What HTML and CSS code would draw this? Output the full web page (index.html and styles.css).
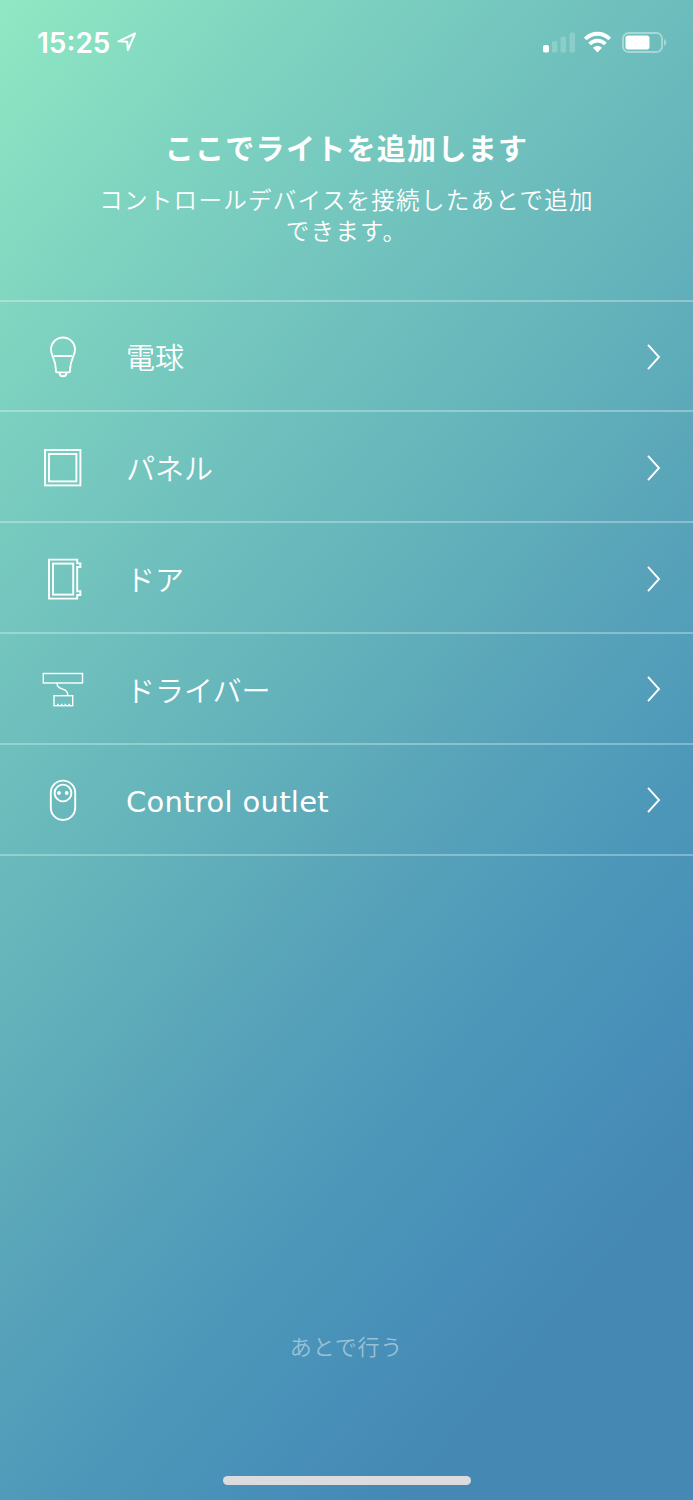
FILE: index.html
```html
<!DOCTYPE html>
<html lang="ja">
<head>
  <meta charset="UTF-8" />
  <meta name="viewport" content="width=device-width, initial-scale=1.0"/>
  <title>ライトを追加</title>
  <link rel="stylesheet" href="styles.css">
</head>
<body>

<!-- Status bar -->
<div class="status-bar">
  <span class="time">15:25</span>
  <svg class="location" width="20" height="20" viewBox="0 0 20 20">
    <path d="M1.5 9.3 L18 1.5 L10.8 18 L10.3 9.8 Z"/>
  </svg>
  <div class="status-icons">
    <svg width="33" height="22" viewBox="0 0 33 22">
      <rect class="solid" x="0" y="13" width="6" height="7.5" rx="1.8"/>
      <rect class="faint" x="9" y="9" width="5.5" height="11.5" rx="1.5"/>
      <rect class="faint" x="17.5" y="4.5" width="5.5" height="16" rx="1.5"/>
      <rect class="faint" x="26.5" y="0.5" width="5.5" height="20" rx="1.5"/>
    </svg>
    <svg class="wifi" width="28" height="22" viewBox="0 0 28 22">
      <path d="M1.3 7 C8.1 0 18.9 0 25.7 7"/>
      <path d="M5.6 12 C10.1 7.6 16.9 7.6 21.4 12"/>
      <path class="dot" d="M9 15.8 C11.5 13.3 15.5 13.3 18 15.8 L13.5 20.6 Z"/>
    </svg>
    <svg width="45" height="22" viewBox="0 0 45 22">
      <rect class="battery" x="1" y="1" width="39" height="19" rx="5.5"/>
      <rect class="solid" x="3.5" y="3.5" width="24" height="14" rx="2.8"/>
      <path class="cap" d="M42 7 C45 8.5 45 12.5 42 14 Z"/>
    </svg>
  </div>
</div>

<!-- Header -->
<div class="header">
  <h1>ここでライトを追加します</h1>
  <p>コントロールデバイスを接続したあとで追加<br>できます。</p>
</div>

<!-- Device list -->
<ul class="device-list">
  <li class="device">
    <svg class="icon" width="42" height="44" viewBox="0 0 42 44">
      <path d="M13.9 34.5 C13.9 24 9 21.5 9 14.5 A12 12 0 0 1 33 14.5 C33 21.5 28.1 24 28.1 34.5 V36.2 Q28.1 37.4 26.9 37.4 H15.1 Q13.9 37.4 13.9 36.2 Z"/>
      <path d="M11.8 21 H30.2"/>
      <path d="M17.5 38 C17.5 42.3 24.5 42.3 24.5 38"/>
    </svg>
    <span class="label">電球</span>
    <svg class="chevron" width="14" height="28" viewBox="0 0 14 28"><path d="M1 1.8 L12 14 L1 26.2"/></svg>
  </li>
  <li class="device">
    <svg class="icon" width="42" height="44" viewBox="0 0 42 44">
      <rect x="3" y="4" width="35.4" height="35.4"/>
      <rect x="7" y="8" width="27.4" height="27.4"/>
    </svg>
    <span class="label">パネル</span>
    <svg class="chevron" width="14" height="28" viewBox="0 0 14 28"><path d="M1 1.8 L12 14 L1 26.2"/></svg>
  </li>
  <li class="device">
    <svg class="icon" width="42" height="44" viewBox="0 0 42 44">
      <path d="M7 2.6 H35.2 V6.4 H38.4 V10 H35.2 V34.3 H38.4 V38 H35.2 V41.6 H7 Z"/>
      <rect x="11" y="6.6" width="20.2" height="31"/>
    </svg>
    <span class="label">ドア</span>
    <svg class="chevron" width="14" height="28" viewBox="0 0 14 28"><path d="M1 1.8 L12 14 L1 26.2"/></svg>
  </li>
  <li class="device">
    <svg class="icon thin" width="42" height="44" viewBox="0 0 42 44">
      <rect x="1.3" y="6.5" width="39.2" height="9.5"/>
      <path d="M15 16 C15 24.5 25.8 19 25.8 28.7"/>
      <rect x="12" y="28.7" width="18.7" height="10"/>
      <path class="dots" d="M15 37.6 H29"/>
    </svg>
    <span class="label">ドライバー</span>
    <svg class="chevron" width="14" height="28" viewBox="0 0 14 28"><path d="M1 1.8 L12 14 L1 26.2"/></svg>
  </li>
  <li class="device">
    <svg class="icon" width="42" height="44" viewBox="0 0 42 44">
      <rect x="8.8" y="2.6" width="24.4" height="39.4" rx="12.2"/>
      <circle cx="21" cy="15" r="8.4"/>
      <circle class="solid" cx="17" cy="15" r="1.9"/>
      <circle class="solid" cx="24.7" cy="15" r="1.9"/>
    </svg>
    <span class="label latin">Control outlet</span>
    <svg class="chevron" width="14" height="28" viewBox="0 0 14 28"><path d="M1 1.8 L12 14 L1 26.2"/></svg>
  </li>
</ul>

<!-- Footer -->
<div class="footer">
  <a class="later">あとで行う</a>
  <div class="home-bar"></div>
</div>

</body>
</html>
```
FILE: styles.css
```css
* {
  margin: 0;
  padding: 0;
  box-sizing: border-box;
}

body {
  height: 1500px;
  display: flex;
  flex-direction: column;
  overflow: hidden;
  color: #fff;
  font-family: "Noto Sans CJK JP", sans-serif;
  background: linear-gradient(130.5deg, #90e8c3 0%, #7fd4c0 15%, #6fc0bd 32%, #65b4bb 43%, #58a3b9 57%, #4c97b9 69%, #478db8 80%, #4488b3 86%);
}

svg {
  fill: none;
  stroke: #fff;
  flex-shrink: 0;
}

.solid {
  fill: #fff;
  stroke: none;
}

.status-bar {
  height: 84px;
  padding: 1px 26px 0 37px;
  display: flex;
  align-items: center;
}

.time {
  padding-top: 1px;
  font-family: Inter, sans-serif;
  font-size: 28px;
  font-weight: 600;
  line-height: 34px;
}

.location {
  margin: 0 0 1px 7px;
  stroke-width: 2;
  stroke-linejoin: round;
}

.status-icons {
  margin-left: auto;
  display: flex;
  gap: 9px;
}

.faint {
  fill: rgba(255, 255, 255, 0.2);
  stroke: none;
}

.wifi {
  margin-left: -1px;
  margin-right: 1px;
  overflow: visible;
  stroke-width: 3.8;
}

.wifi .dot {
  fill: #fff;
  stroke: none;
}

.battery {
  stroke: rgba(255, 255, 255, 0.4);
  stroke-width: 2;
}

.cap {
  fill: rgba(255, 255, 255, 0.4);
  stroke: none;
}

.header {
  height: 215.6px;
  padding-top: 41px;
  text-align: center;
}

h1 {
  font-size: 29px;
  font-weight: 700;
  letter-spacing: 1.3px;
  line-height: 44px;
}

.header p {
  margin-top: 15px;
  font-size: 23.5px;
  font-weight: 350;
  letter-spacing: 1.3px;
  line-height: 31px;
}

.device-list {
  list-style: none;
  border-top: 2px solid rgba(255, 255, 255, 0.3);
}

.device {
  height: 110.8px;
  padding: 2px 32px 0 42px;
  display: flex;
  align-items: center;
  border-bottom: 2px solid rgba(255, 255, 255, 0.3);
}

.icon {
  stroke-width: 1.9;
}

.thin {
  stroke-width: 1.4;
}

.dots {
  stroke-width: 1.6;
  stroke-dasharray: 1.6 2.2;
}

.label {
  flex: 1;
  margin: -1px 0 0 42px;
  font-size: 29px;
  font-weight: 350;
  line-height: 44px;
}

.latin {
  margin-top: 3px;
  font-family: "DejaVu Sans", sans-serif;
  font-weight: 400;
  letter-spacing: 0.3px;
}

.chevron {
  stroke-width: 1.9;
}

.footer {
  margin-top: auto;
  display: flex;
  flex-direction: column;
  align-items: center;
}

.later {
  font-size: 22px;
  font-weight: 350;
  letter-spacing: 0.8px;
  line-height: 32px;
  color: rgba(255, 255, 255, 0.45);
}

.home-bar {
  width: 248px;
  height: 9px;
  margin: 115px 0 15px;
  border-radius: 5px;
  background: #dcdcde;
}
```
